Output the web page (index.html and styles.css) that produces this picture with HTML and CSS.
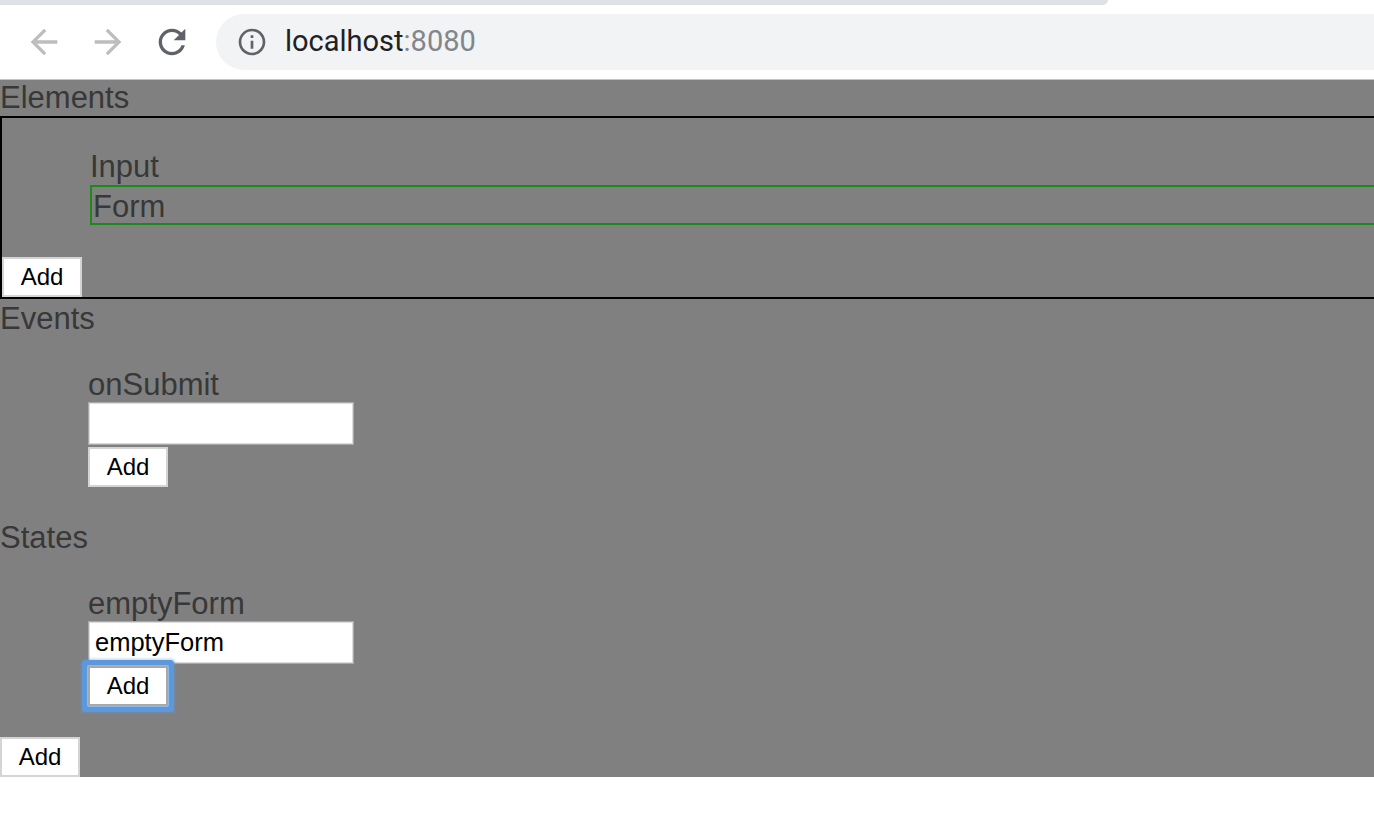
FILE: index.html
```html
<!DOCTYPE html>
<html>
<head>
<meta charset="utf-8">
<title>localhost:8080</title>
<link rel="stylesheet" href="styles.css">
</head>
<body>
<header class="chrome">
  <div class="tabstrip"></div>
  <div class="toolbar">
    <span class="nav-btn nav-disabled">
      <svg viewBox="0 0 24 24" width="40" height="40"><path d="M20 11H7.83l5.59-5.59L12 4l-8 8 8 8 1.41-1.41L7.830 13H20v-2z"/></svg>
    </span>
    <span class="nav-btn nav-disabled">
      <svg viewBox="0 0 24 24" width="40" height="40"><path d="M4 11h12.17l-5.59-5.59L12 4l8 8-8 8-1.41-1.41L16.17 13H4v-2z"/></svg>
    </span>
    <span class="nav-btn">
      <svg viewBox="0 0 24 24" width="40" height="40"><path d="M17.65 6.35C16.2 4.9 14.21 4 12 4c-4.42 0-7.99 3.58-7.99 8s3.57 8 7.99 8c3.73 0 6.84-2.55 7.73-6h-2.08c-.82 2.33-3.04 4-5.65 4-3.31 0-6-2.69-6-6s2.69-6 6-6c1.66 0 3.14.69 4.22 1.78L13 11h7V4l-2.35 2.35z"/></svg>
    </span>
    <div class="omnibox">
      <svg class="info-icon" viewBox="0 0 24 24" width="32" height="32"><path d="M11 7h2v2h-2zm0 4h2v6h-2zm1-9C6.48 2 2 6.48 2 12s4.48 10 10 10 10-4.480 10-10S17.52 2 12 2zm0 18c-4.41 0-8-3.59-8-8s3.59-8 8-8 8 3.59 8 8-3.59 8-8 8z"/></svg>
      <span class="url"><span class="url-host">localhost</span><span class="url-port">:8080</span></span>
    </div>
  </div>
</header>

<main class="page">
  <div class="section-title section-title-first">Elements</div>
  <div class="elements-box">
    <ul class="item-list item-list-elements">
      <li class="item">
        <div class="item-label">Input</div>
        <div class="element-field">Form</div>
      </li>
    </ul>
    <button class="btn">Add</button>
  </div>

  <div class="section-title">Events</div>
  <ul class="item-list">
    <li class="item">
      <div class="item-label">onSubmit</div>
      <input class="text-input" type="text" value="">
      <button class="btn btn-inline">Add</button>
    </li>
  </ul>

  <div class="section-title">States</div>
  <ul class="item-list">
    <li class="item">
      <div class="item-label">emptyForm</div>
      <input class="text-input" type="text" value="emptyForm">
      <button class="btn btn-inline btn-focused">Add</button>
    </li>
  </ul>

  <button class="btn">Add</button>
</main>
</body>
</html>
```

FILE: styles.css
```css
html, body {
  margin: 0;
  padding: 0;
}

body {
  background: #ffffff;
  font-family: "Liberation Sans", Arial, sans-serif;
  overflow: hidden;
  width: 1374px;
  height: 824px;
}

/* ---------- browser chrome ---------- */
.chrome {
  height: 79px;
  border-bottom: 1px solid #c4c4c4;
  background: #ffffff;
}

.tabstrip {
  width: 1108px;
  height: 5px;
  background: #dee1e6;
  border-bottom-right-radius: 7px;
}

.toolbar {
  display: flex;
  align-items: center;
  gap: 24px;
  height: 56px;
  margin-top: 9px;
  padding-left: 24px;
}

.nav-btn {
  display: flex;
  align-items: center;
  justify-content: center;
  width: 40px;
  height: 40px;
  fill: #5f6368;
}

.nav-disabled {
  fill: #bdbdbd;
}

.omnibox {
  flex: 1;
  display: flex;
  align-items: center;
  height: 56px;
  background: #f1f3f4;
  border-radius: 28px 0 0 28px;
  padding-left: 20px;
}

.info-icon {
  fill: #5f6368;
  flex: none;
}

.url {
  margin-left: 17px;
  font-family: Roboto, "Liberation Sans", sans-serif;
  font-size: 29px;
  line-height: 34px;
  padding-bottom: 2px;
}

.url-host {
  color: #202124;
}

.url-port {
  color: #80868b;
}

/* ---------- page ---------- */
.page {
  background: #808080;
  color: #383838;
  font-size: 31px;
  height: 697px;
  display: flex;
  flex-direction: column;
  align-items: flex-start;
}

.section-title {
  line-height: 36px;
  padding-top: 2px;
}

.section-title-first {
  padding-top: 0;
}

.elements-box {
  align-self: stretch;
  border: 2px solid #000000;
  border-right: 0;
  display: flex;
  flex-direction: column;
  align-items: flex-start;
}

.item-list {
  list-style: none;
  margin: 31px 0 31px 0;
  padding: 0 0 0 88px;
}

.item-list-elements {
  align-self: stretch;
  margin-bottom: 32px;
}

.item {
  display: flex;
  flex-direction: column;
  align-items: flex-start;
}

.item-label {
  line-height: 34px;
}

.item-list-elements .item {
  align-items: stretch;
}

.item-list-elements .item-label {
  line-height: 36px;
}

.element-field {
  border: 2px solid #1b8a1b;
  border-right: 0;
  height: 33px;
  padding: 3px 0 0 1px;
  line-height: 34px;
}

.text-input {
  box-sizing: border-box;
  width: 266px;
  height: 43px;
  margin: 0;
  padding: 0 0 0 6px;
  border: 1px solid #a9a9a9;
  box-shadow: inset 0 0 0 1px #dcdcdc;
  background: #ffffff;
  color: #000000;
  font-family: "Liberation Sans", Arial, sans-serif;
  font-size: 25.5px;
  outline: none;
}

.btn {
  box-sizing: border-box;
  width: 80px;
  height: 40px;
  margin: 0;
  padding: 0;
  border: 2px solid #d4d4d4;
  background: #ffffff;
  color: #000000;
  font-family: "Liberation Sans", Arial, sans-serif;
  font-size: 24px;
  line-height: 34px;
  text-align: center;
  border-radius: 0;
}

.btn-inline {
  margin-top: 2px;
}

.btn-focused {
  border-color: #a8a8a8;
  border-radius: 1px;
  box-shadow: 0 0 0 1px #8fb9e8, 0 0 0 6px #5b98dc, 0 0 3px 7px rgba(91, 152, 220, 0.45);
}
```
